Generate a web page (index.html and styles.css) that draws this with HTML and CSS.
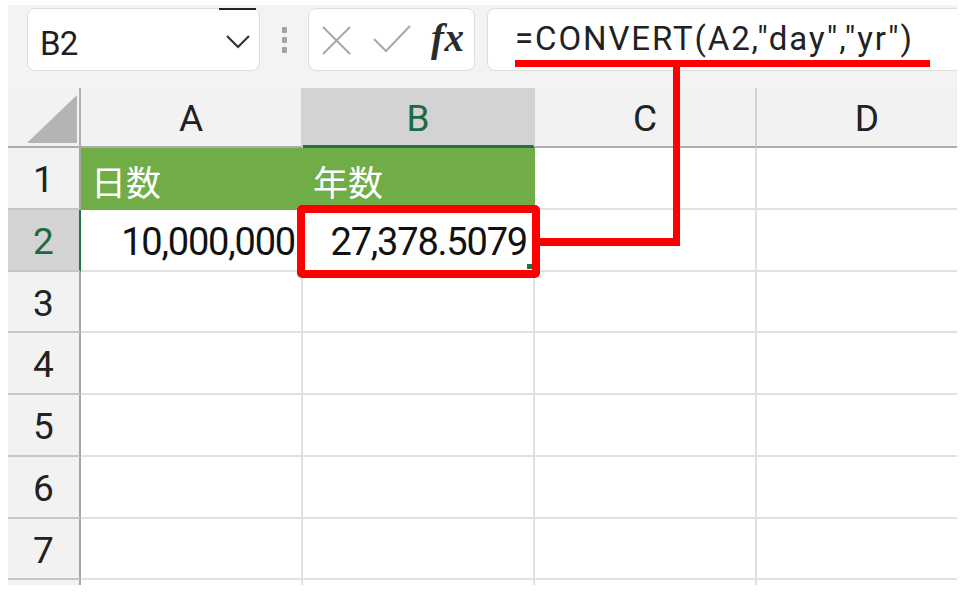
FILE: index.html
```html
<!DOCTYPE html>
<html lang="ja">
<head>
<meta charset="utf-8">
<title>CONVERT</title>
<link rel="stylesheet" href="styles.css">
</head>
<body>
<div class="app">
  <div class="toolbar">
    <div class="namebox">
      <span class="name">B2</span>
      <span class="topline"></span>
      <svg class="chev" width="26" height="16" viewBox="0 0 26 16"><polyline points="2,3 13,14 24,3" fill="none" stroke="#333" stroke-width="2.2"/></svg>
    </div>
    <div class="grip"><i></i><i></i><i></i></div>
    <div class="fxbox">
      <svg class="ic-x" width="29" height="29" viewBox="0 0 29 29"><path d="M1 1L28 28M28 1L1 28" stroke="#a8a8a8" stroke-width="2" fill="none"/></svg>
      <svg class="ic-ok" width="38" height="28" viewBox="0 0 38 28"><polyline points="1,14 13,26 37,1" fill="none" stroke="#a8a8a8" stroke-width="2"/></svg>
      <span class="fx">fx</span>
    </div>
    <div class="formula"><span class="ftext">=CONVERT(A2,"day","yr")</span></div>
  </div>
  <div class="sheet">
    <div class="corner"><svg width="71" height="58" viewBox="0 0 71 58"><polygon points="19,55 69,7 69,55" fill="#b4b4b4"/></svg></div>
    <div class="ch">A</div>
    <div class="ch sel">B</div>
    <div class="ch">C</div>
    <div class="ch">D</div>

    <div class="rh">1</div>
    <div class="c g">日数</div>
    <div class="c g">年数</div>
    <div class="c"></div>
    <div class="c"></div>

    <div class="rh sel">2</div>
    <div class="c num">10,000,000</div>
    <div class="c num b2">27,378.5079<span class="handle"></span></div>
    <div class="c"></div>
    <div class="c"></div>

    <div class="rh">3</div><div class="c"></div><div class="c"></div><div class="c"></div><div class="c"></div>
    <div class="rh">4</div><div class="c"></div><div class="c"></div><div class="c"></div><div class="c"></div>
    <div class="rh">5</div><div class="c"></div><div class="c"></div><div class="c"></div><div class="c"></div>
    <div class="rh">6</div><div class="c"></div><div class="c"></div><div class="c"></div><div class="c"></div>
    <div class="rh">7</div><div class="c"></div><div class="c"></div><div class="c"></div><div class="c"></div>
    <div class="rh"></div><div class="c"></div><div class="c"></div><div class="c"></div><div class="c"></div>
  </div>
</div>
<div class="marks">
  <div class="m-under"></div>
  <div class="m-vert"></div>
  <div class="m-horz"></div>
  <div class="m-box"></div>
</div>
</body>
</html>
```
FILE: styles.css
```css
* { box-sizing: border-box; }
body { margin: 0; background: #fff; font-family: Roboto, "Liberation Sans", sans-serif; }

.app {
  margin: 5px 0 0 8px;
  width: 949px;
  height: 580px;
  overflow: hidden;
  background: #f3f3f3;
}

/* toolbar */
.toolbar {
  display: flex;
  align-items: flex-start;
  height: 83px;
  padding: 3px 0 0 19px;
}
.namebox {
  position: relative;
  display: flex;
  align-items: flex-start;
  width: 233px;
  height: 63px;
  flex: none;
  background: #fff;
  border: 1px solid #dedede;
  border-radius: 8px;
  padding-left: 12px;
}
.name {
  margin-top: 18px;
  font-size: 33px;
  line-height: 33px;
  letter-spacing: -0.8px;
  color: #1f1f1f;
}
.topline {
  position: absolute;
  top: -1px;
  left: 191px;
  width: 37px;
  height: 2px;
  background: #222;
}
.chev { margin: 24px 8px 0 auto; display: block; }

.grip {
  width: 48px;
  flex: none;
  display: flex;
  flex-direction: column;
  align-items: center;
  gap: 4.5px;
  padding-top: 19px;
}
.grip i { display: block; width: 5px; height: 5.5px; background: #a3a3a3; border-radius: 1px; }

.fxbox {
  display: flex;
  align-items: flex-start;
  width: 167px;
  height: 63px;
  flex: none;
  background: #fff;
  border: 1px solid #dedede;
  border-radius: 8px;
  padding-left: 13px;
}
.ic-x { display: block; margin-top: 17px; }
.ic-ok { display: block; margin: 16px 0 0 22px; }
.fx {
  margin: 9px 0 0 20px;
  font-family: "Liberation Serif", serif;
  font-style: italic;
  font-weight: bold;
  font-size: 39px;
  line-height: 39px;
  color: #2b2b2b;
  letter-spacing: 0.5px;
}

.formula {
  flex: 1;
  margin: 0 -30px 0 12px;
  height: 63px;
  background: #fff;
  border: 1px solid #dedede;
  border-radius: 8px;
  padding: 13px 0 0 27px;
}
.ftext {
  font-size: 33px;
  line-height: 33px;
  letter-spacing: 1.9px;
  color: #222;
  white-space: nowrap;
}

/* sheet */
.sheet {
  display: grid;
  grid-template-columns: 73px 222px 232px 222px 222px;
  grid-template-rows: 60px 62px 62px 61px 62px 62px 62px 61px 30px;
}
.corner {
  background: #f2f2f2;
  border-right: 2px solid #b0b0b0;
  border-bottom: 2px solid #acacac;
}
.corner svg { display: block; }
.ch {
  background: #f2f2f2;
  border-right: 2px solid #d2d2d2;
  border-bottom: 2px solid #acacac;
  text-align: center;
  font-size: 37px;
  line-height: 37px;
  padding-top: 12px;
  color: #222;
}
.ch.sel {
  background: #d3d3d3;
  color: #1e6b41;
  border-bottom: 3px solid #217346;
}
.rh {
  background: #f2f2f2;
  border-right: 2px solid #a6a6a6;
  border-bottom: 2px solid #c6c6c6;
  text-align: center;
  font-size: 37px;
  line-height: 37px;
  padding-top: 13px;
  color: #222;
}
.rh.sel {
  background: #d3d3d3;
  color: #1e6b41;
  border-right-color: #217346;
}
.c {
  position: relative;
  background: #fff;
  border-right: 2px solid #e1e1e1;
  border-bottom: 2px solid #e1e1e1;
  font-size: 38px;
  line-height: 38px;
  padding-top: 13px;
  letter-spacing: -1.2px;
  white-space: nowrap;
  color: #111;
}
.c.num { text-align: right; padding-right: 6px; }
.c.g {
  background: #70ad47;
  border-color: #70ad47;
  color: #fff;
  font-family: "Noto Sans CJK JP", sans-serif;
  font-size: 35px;
  letter-spacing: 0;
  padding: 14px 0 0 10px;
}
.handle {
  position: absolute;
  right: 1px;
  bottom: 1px;
  width: 5px;
  height: 5px;
  background: #217346;
}

/* red annotations */
.marks div { position: absolute; background: #f00; }
.m-under { left: 515px; top: 60px; width: 415px; height: 7px; }
.m-vert { left: 673px; top: 60px; width: 7px; height: 186px; }
.m-horz { left: 540px; top: 238px; width: 140px; height: 8px; }
.marks .m-box {
  left: 297px;
  top: 205px;
  width: 243px;
  height: 73px;
  background: transparent;
  border: 8px solid #f00;
  border-radius: 5px;
}
```
